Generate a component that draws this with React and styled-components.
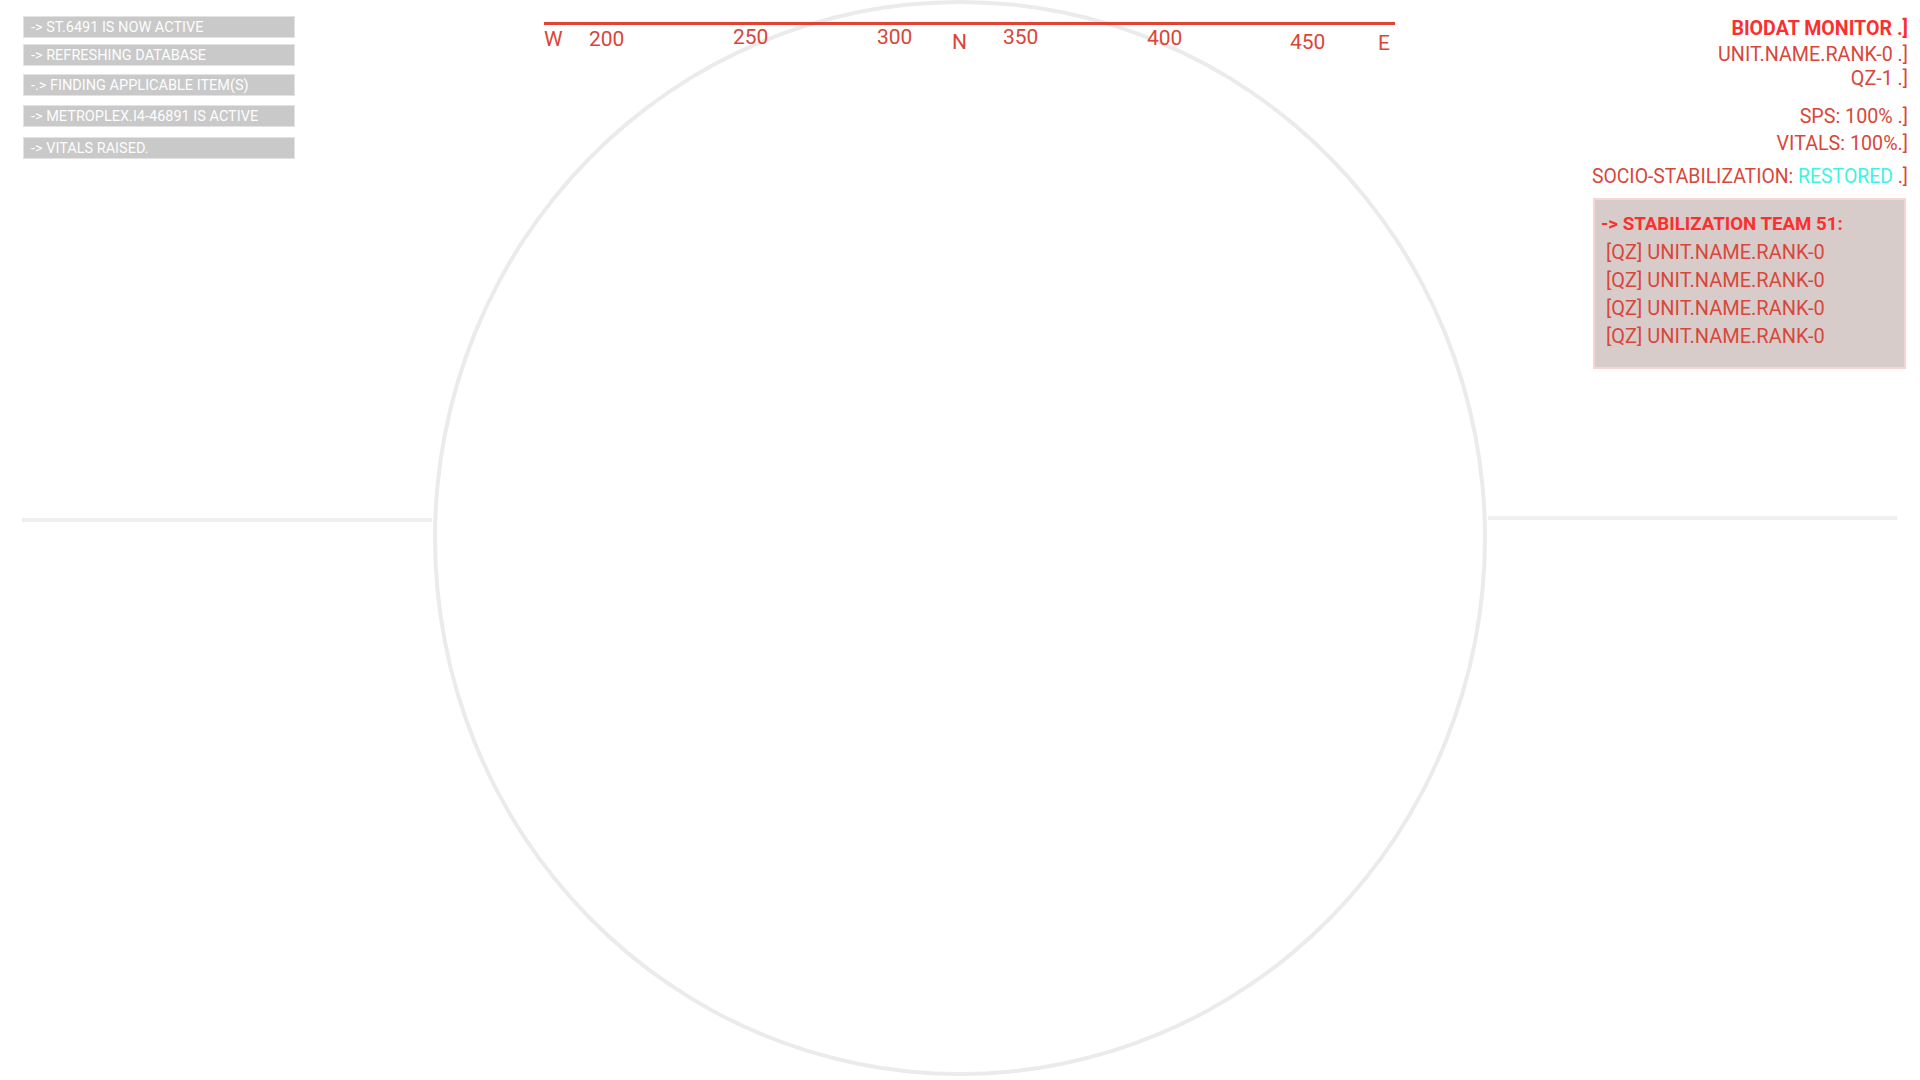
import React from 'react';
import styled, { createGlobalStyle } from 'styled-components';

const GlobalStyle = createGlobalStyle`
    html, body {
        margin: 0;
        padding: 0;
        background: #ffffff;
    }
    body {
        font-family: Roboto, "Noto Sans", "Liberation Sans", sans-serif;
    }
`;

const Screen = styled.div`
    width: 1920px;
    height: 1080px;
    display: grid;
    grid-template-columns: 433px 1054px 1fr;
    overflow: hidden;
`;

const SideColumn = styled.div`
    display: grid;
    grid-template-areas: "stack";
    height: 1080px;

    & > * {
        grid-area: stack;
    }
`;

const Horizon = styled.div`
    align-self: start;
    height: 4px;
    background: #eeeff1;
    margin: ${props => props.$right ? '516px 23px 0 1px' : '518px 1px 0 22px'};
`;

const LogList = styled.ul`
    align-self: start;
    list-style: none;
    margin: 16px 0 0 23px;
    padding: 0;
    width: 272px;
`;

const LogItem = styled.li`
    box-sizing: border-box;
    height: 22px;
    margin-top: ${props => props.$space || 0}px;
    padding: 1px 0 0 7px;
    background: #c9c9c9;
    border: 1px solid #e3e3e3;
    color: #fdfdfd;
    font-size: 14.5px;
    line-height: 19px;
    white-space: nowrap;
`;

const CenterColumn = styled.div`
    display: grid;
    grid-template-areas: "stack";
    height: 1080px;

    & > * {
        grid-area: stack;
    }
`;

const Ring = styled.div`
    box-sizing: border-box;
    width: 1054px;
    height: 1076px;
    border: 4px solid #ebebeb;
    border-radius: 50%;
`;

const Compass = styled.div`
    position: relative;
    align-self: start;
    width: 851px;
    height: 40px;
    margin: 22px 0 0 111px;
    border-top: 3px solid #df4332;
`;

const Tick = styled.span`
    position: absolute;
    left: ${props => props.$x}px;
    top: ${props => props.$y}px;
    color: #db4538;
    font-size: 21px;
    line-height: 24px;
    white-space: nowrap;
`;

const Monitor = styled.div`
    align-self: start;
    display: flex;
    flex-direction: column;
    align-items: flex-end;
    padding: 17px 12px 0 0;
    color: #d9473b;
    font-size: 19.7px;
    line-height: 24px;
    text-align: right;
`;

const MonitorTitle = styled.div`
    color: #fb2f2f;
    font-weight: 700;
    font-size: 19.6px;
`;

const MonitorLine = styled.div`
    margin-top: ${props => props.$space || 0}px;
    font-size: ${props => props.$size || 19.7}px;
    white-space: nowrap;
`;

const Restored = styled.span`
    color: #3ef3e3;
`;

const TeamBox = styled.div`
    box-sizing: border-box;
    width: 313px;
    margin: 9px 2px 0 0;
    padding: 10px 6px 17px;
    background: #d8cccb;
    border: 2px solid #fad3d3;
    text-align: left;
`;

const TeamTitle = styled.div`
    color: #fb2f2f;
    font-weight: 700;
    font-size: 18.7px;
    line-height: 28px;
`;

const TeamMember = styled.div`
    padding-left: 5px;
    font-size: 20px;
    line-height: 28px;
    white-space: nowrap;
`;

const logs = [
    { text: '-> ST.6491 IS NOW ACTIVE', space: 0 },
    { text: '-> REFRESHING DATABASE', space: 6 },
    { text: '-.> FINDING APPLICABLE ITEM(S)', space: 8 },
    { text: '-> METROPLEX.I4-46891 IS ACTIVE', space: 9 },
    { text: '-> VITALS RAISED.', space: 10 },
];

const ticks = [
    { label: 'W', x: 0, y: 2 },
    { label: '200', x: 45, y: 2 },
    { label: '250', x: 189, y: 0 },
    { label: '300', x: 333, y: 0 },
    { label: 'N', x: 408, y: 5 },
    { label: '350', x: 459, y: 0 },
    { label: '400', x: 603, y: 1 },
    { label: '450', x: 746, y: 5 },
    { label: 'E', x: 834, y: 6 },
];

const team = [
    '[QZ] UNIT.NAME.RANK-0',
    '[QZ] UNIT.NAME.RANK-0',
    '[QZ] UNIT.NAME.RANK-0',
    '[QZ] UNIT.NAME.RANK-0',
];

const App = () => {
    return (
        <>
            <GlobalStyle />
            <Screen>
                <SideColumn>
                    <LogList>
                        {logs.map((log, i) => (
                            <LogItem key={i} $space={log.space}>{log.text}</LogItem>
                        ))}
                    </LogList>
                    <Horizon />
                </SideColumn>

                <CenterColumn>
                    <Ring />
                    <Compass>
                        {ticks.map((tick) => (
                            <Tick key={tick.label} $x={tick.x} $y={tick.y}>{tick.label}</Tick>
                        ))}
                    </Compass>
                </CenterColumn>

                <SideColumn>
                    <Horizon $right />
                    <Monitor>
                        <MonitorTitle>BIODAT MONITOR .]</MonitorTitle>
                        <MonitorLine $space={2}>UNIT.NAME.RANK-0 .]</MonitorLine>
                        <MonitorLine>QZ-1 .]</MonitorLine>
                        <MonitorLine $space={14}>SPS: 100% .]</MonitorLine>
                        <MonitorLine $space={3}>VITALS: 100%.]</MonitorLine>
                        <MonitorLine $space={9} $size={19.4}>SOCIO-STABILIZATION: <Restored>RESTORED</Restored> .]</MonitorLine>
                        <TeamBox>
                            <TeamTitle>-&gt; STABILIZATION TEAM 51:</TeamTitle>
                            {team.map((member, i) => (
                                <TeamMember key={i}>{member}</TeamMember>
                            ))}
                        </TeamBox>
                    </Monitor>
                </SideColumn>
            </Screen>
        </>
    );
};

export default App;
